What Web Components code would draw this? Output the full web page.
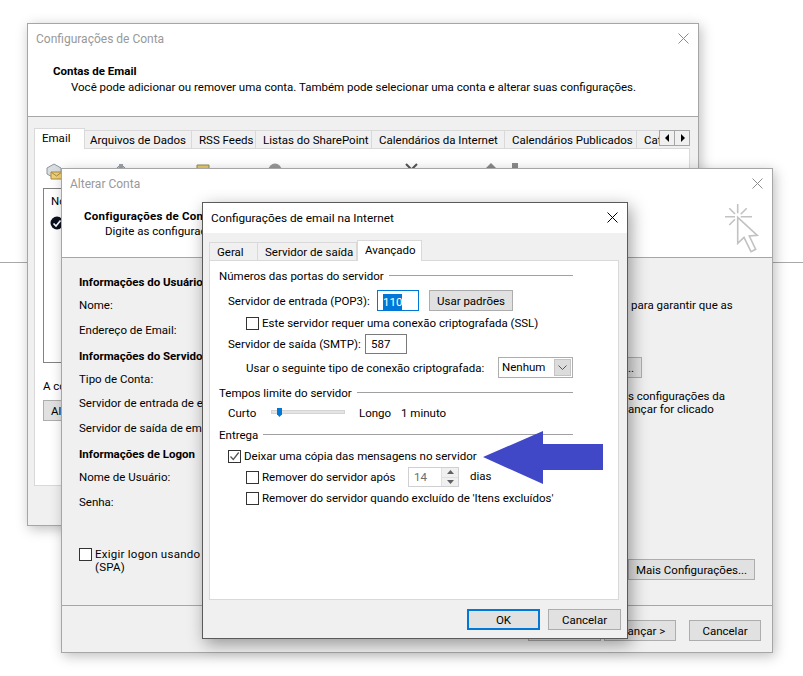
<!DOCTYPE html>
<html lang="pt-BR">
<head>
<meta charset="utf-8">
<title>Configurações de email na Internet</title>
<style>
  html, body { margin: 0; background: #fff; }
  body { font: 11.5px/16px Roboto, "Noto Sans", sans-serif; color: #000; }
  .r { display: flex; align-items: center; }
</style>
</head>
<body>
<desk-top>
  <!-- account settings, bottom window -->
  <ui-window x="27" y="23" w="672" h="503" heading="Configurações de Conta" head-h="93">
    <div slot="head" style="padding:39px 0 0 25px">
      <b>Contas de Email</b>
      <div style="margin-left:18px">Você pode adicionar ou remover uma conta. Também pode selecionar uma conta e alterar suas configurações.</div>
    </div>
    <div style="padding:11px 8px 0 6px">
      <ui-tabs scroller>
        <ui-tab active w="51">Email</ui-tab>
        <ui-tab w="107" pad="5">Arquivos de Dados</ui-tab>
        <ui-tab w="64">RSS Feeds</ui-tab>
        <ui-tab w="116">Listas do SharePoint</ui-tab>
        <ui-tab w="133">Calendários da Internet</ui-tab>
        <ui-tab w="132">Calendários Publicados</ui-tab>
        <ui-tab w="60">Catálogos</ui-tab>
        <account-pane slot="pane"></account-pane>
      </ui-tabs>
    </div>
  </ui-window>

  <!-- change account, middle window -->
  <ui-window x="61" y="168" w="712" h="485" heading="Alterar Conta" head-h="89">
    <div slot="head" style="position:relative;height:88px">
      <div style="padding:39px 0 0 22px">
        <b style="letter-spacing:.25px">Configurações de Conta</b>
        <div style="margin-left:21px;margin-top:-1px">Digite as configurações</div>
      </div>
      <cursor-mark></cursor-mark>
    </div>
    <change-form></change-form>
  </ui-window>

  <!-- internet mail settings, top window -->
  <ui-window x="202" y="202" w="426" h="437" heading="Configurações de email na Internet" head-h="30" active>
    <div style="padding:7px 8px 0 6px">
      <ui-tabs>
        <ui-tab w="49" pad="7" first>Geral</ui-tab>
        <ui-tab w="99">Servidor de saída</ui-tab>
        <ui-tab active w="65">Avançado</ui-tab>
        <advanced-pane slot="pane"></advanced-pane>
      </ui-tabs>
    </div>
    <div class="r" style="justify-content:flex-end;gap:8px;padding:9px 6px 0 0">
      <ui-button w="73" h="21" primary>OK</ui-button>
      <ui-button w="73" h="21">Cancelar</ui-button>
    </div>
  </ui-window>

  <blue-arrow></blue-arrow>
</desk-top>

<script>
function shadow(el, html) {
  const root = el.attachShadow({ mode: "open" });
  root.innerHTML = html;
  return root;
}

class DeskTop extends HTMLElement {
  connectedCallback() {
    shadow(this, `
      <style>
        :host { display: block; position: relative; width: 803px; height: 676px; overflow: hidden; }
        .line { position: absolute; left: 0; right: 0; top: 262px; height: 1px; background: #a9a9a9; }
      </style>
      <div class="line"></div><slot></slot>`);
  }
}

class UiWindow extends HTMLElement {
  connectedCallback() {
    const a = (n) => this.getAttribute(n);
    const active = this.hasAttribute("active");
    shadow(this, `
      <style>
        :host {
          position: absolute; left: ${a("x")}px; top: ${a("y")}px; width: ${a("w")}px; height: ${a("h")}px;
          box-sizing: border-box; display: flex; flex-direction: column;
          background: #f0f0f0; border: 1px solid ${active ? "#5a5a5a" : "#a6a6a6"};
          box-shadow: ${active ? "3px 5px 16px rgba(0,0,0,.38)" : "2px 3px 12px rgba(0,0,0,.26)"};
        }
        .head { position: relative; background: #fff; height: ${a("head-h")}px; flex: none; box-sizing: border-box;
                ${active ? "" : "border-bottom: 1px solid #a6a6a6;"} }
        .title { position: absolute; left: 8px; top: 7px; font-size: ${active ? 11.8 : 12}px; color: ${active ? "#000" : "#999"}; white-space: nowrap; }
        svg { position: absolute; right: 9px; top: 9px; }
        line { stroke: ${active ? "#000" : "#8c8c8c"}; stroke-width: 1; }
        .body { flex: 1; min-height: 0; }
      </style>
      <div class="head">
        <div class="title">${a("heading")}</div>
        <slot name="head"></slot>
        <svg width="11" height="11" viewBox="0 0 11 11"><line x1=".5" y1=".5" x2="10.500" y2="10.500"/><line x1="10.500" y1=".5" x2=".5" y2="10.500"/></svg>
      </div>
      <div class="body"><slot></slot></div>`);
  }
}

class UiTabs extends HTMLElement {
  connectedCallback() {
    const scroller = this.hasAttribute("scroller") ? `
      <div class="scroll">
        <span><svg width="5" height="8"><path d="M4 0v8L0 4z"/></svg></span>
        <span><svg width="5" height="8"><path d="M1 0v8l4-4z"/></svg></span>
      </div>` : "";
    shadow(this, `
      <style>
        :host { display: block; }
        .strip { display: flex; height: 21px; position: relative; z-index: 1; margin-bottom: -1px; }
        .tabs { display: flex; align-items: flex-end; flex: 1; min-width: 0; overflow: hidden; height: 21px; }
        .scroll { flex: none; display: flex; height: 16px; margin-top: 2px; box-sizing: border-box; border: 1px solid #a6a6a6; background: #f0f0f0; }
        .scroll span { width: 14px; display: flex; align-items: center; justify-content: center; }
        .scroll span + span { border-left: 1px solid #a6a6a6; }
        .pane { display: block; }
      </style>
      <div class="strip"><div class="tabs"><slot></slot></div>${scroller}</div>
      <div class="pane"><slot name="pane"></slot></div>`);
  }
}

class UiTab extends HTMLElement {
  connectedCallback() {
    const active = this.hasAttribute("active");
    const noLeft = !active && !this.hasAttribute("first");
    const pad = this.getAttribute("pad") || 7;
    shadow(this, `
      <style>
        :host {
          display: block; flex: none; box-sizing: border-box; width: ${this.getAttribute("w")}px;
          height: ${active ? 21 : 19}px; border: 1px solid #d9d9d9;
          ${active ? "border-bottom: 0; background: #fff;" : "background: #f0f0f0;"} ${noLeft ? "border-left: 0;" : ""}
          white-space: nowrap; overflow: hidden; padding-left: ${pad}px; line-height: 18px;
        }
      </style><slot></slot>`);
  }
}

class UiButton extends HTMLElement {
  connectedCallback() {
    const primary = this.hasAttribute("primary");
    shadow(this, `
      <style>
        :host {
          display: flex; flex: none; align-items: center; justify-content: center; box-sizing: border-box;
          width: ${this.getAttribute("w")}px; height: ${this.getAttribute("h") || 21}px;
          background: #e1e1e1; border: ${primary ? "2px solid #0078d7" : "1px solid #adadad"};
          white-space: nowrap; overflow: hidden;
        }
      </style><slot></slot>`);
  }
}

class UiCheck extends HTMLElement {
  connectedCallback() {
    const tick = this.hasAttribute("checked")
      ? `<svg width="11" height="11" viewBox="0 0 11 11"><path d="M1.500 5.500L4.300 8.500 9.700 1.500" fill="none" stroke="#555" stroke-width="1.300"/></svg>` : "";
    shadow(this, `
      <style>
        :host { display: flex; align-items: center; height: 16px; white-space: nowrap; }
        .box { flex: none; width: 13px; height: 13px; box-sizing: border-box; border: 1px solid #333; background: #fff;
               margin-right: 3px; display: flex; align-items: center; justify-content: center; }
      </style>
      <span class="box">${tick}</span><slot></slot>`);
  }
}

class UiGroup extends HTMLElement {
  connectedCallback() {
    shadow(this, `
      <style>
        :host { display: flex; align-items: center; height: 16px; white-space: nowrap; margin-right: 45px; }
        i { flex: 1; height: 1px; background: #a0a0a0; margin: -1px 0 0 5px; }
      </style>
      <slot></slot><i></i>`);
  }
}

class UiInput extends HTMLElement {
  connectedCallback() {
    const sel = this.hasAttribute("selected");
    shadow(this, `
      <style>
        :host {
          display: flex; flex: none; align-items: center; box-sizing: border-box; padding-left: 5px;
          width: ${this.getAttribute("w")}px; height: ${this.getAttribute("h")}px; background: #fff;
          border: 1px solid ${sel ? "#0078d7" : "#7a7a7a"};
        }
        span { ${sel ? "background: #0078d7; color: #fff; width: 19px; height: 16px; line-height: 16px; margin-top: 2px;" : ""} }
      </style><span><slot></slot></span>`);
  }
}

class UiSelect extends HTMLElement {
  connectedCallback() {
    shadow(this, `
      <style>
        :host {
          display: flex; flex: none; align-items: center; justify-content: space-between; box-sizing: border-box;
          width: 75px; height: 21px; border: 1px solid #adadad; padding: 0 1px 0 3px; background: #fff;
        }
        span { margin-top: -2px; }
        b { width: 17px; height: 17px; box-sizing: border-box; background: #dcdcdc; border: 1px solid #c4c4c4; display: flex; align-items: center; justify-content: center; }
      </style>
      <span><slot></slot></span>
      <b><svg width="9" height="5" viewBox="0 0 9 5"><path d="M.5.5l4 4 4-4" fill="none" stroke="#555"/></svg></b>`);
  }
}

class UiSpin extends HTMLElement {
  connectedCallback() {
    shadow(this, `
      <style>
        :host { display: flex; flex: none; box-sizing: border-box; width: 51px; height: 20px; border: 1px solid #d0d0d0; background: #fff; }
        .v { flex: 1; padding-left: 5px; color: #6d6d6d; line-height: 19px; }
        .b { width: 16px; display: flex; flex-direction: column; background: #f0f0f0; border-left: 1px solid #e0e0e0; }
        .b span { flex: 1; display: flex; align-items: center; justify-content: center; }
        .b span + span { border-top: 1px solid #e0e0e0; }
        path { fill: #606060; }
      </style>
      <div class="v"><slot></slot></div>
      <div class="b">
        <span><svg width="7" height="4"><path d="M3.500 0L7 4H0z"/></svg></span>
        <span><svg width="7" height="4"><path d="M0 0h7L3.500 4z"/></svg></span>
      </div>`);
  }
}

class UiSlider extends HTMLElement {
  connectedCallback() {
    shadow(this, `
      <style>
        :host { display: block; flex: none; position: relative; width: 74px; height: 16px; }
        .t { position: absolute; left: 0; right: 0; top: 5px; background: #e4e4e4; border: 1px solid #d4d4d4; height: 2px; }
        .k { position: absolute; left: 6px; top: 3px; width: 5px; height: 9px; background: #0078d7; clip-path: polygon(0 0,100% 0,100% 70%,50% 100%,0 70%); }
      </style>
      <div class="t"></div><div class="k"></div>`);
  }
}

class CursorMark extends HTMLElement {
  connectedCallback() {
    shadow(this, `
      <style>
        :host { position: absolute; left: 662px; top: 34px; width: 36px; height: 50px; }
        path { fill: none; stroke: #c2c2c2; stroke-width: 1.600; }
      </style>
      <svg width="36" height="50" viewBox="0 0 36 50">
        <path d="M1 13.700H11M13.700 1V10.300M16.700 13.700H28M5.300 5.300L11 11M22.700 5.300L16.700 11.300M5.300 22L11 16.300"/>
        <path d="M13.700 14.300V40.300L20 34.300 27 48.700 31.700 46.300 25.300 33 33.300 32.300Z"/>
      </svg>`);
  }
}

class BlueArrow extends HTMLElement {
  connectedCallback() {
    shadow(this, `
      <style>
        :host { position: absolute; left: 483px; top: 431px; width: 120px; height: 53px; }
        svg { display: block; }
      </style>
      <svg width="120" height="53" viewBox="0 0 120 53"><path fill="#4048c8" d="M0 26L60 0V13H120V39H60V53Z"/></svg>`);
  }
}

class AccountPane extends HTMLElement {
  connectedCallback() {
    const item = (w, icon, label) => `<div class="it" style="width:${w}px">${icon}<span>${label}</span></div>`;
    const mail = `<svg width="17" height="17" viewBox="0 0 17 17">
      <path d="M1 5L8 1l7 4v6l-7 4-7-4z" fill="#d8dde2" stroke="#8d959c"/>
      <path d="M5 9h11v7H5z" fill="#f1d27a" stroke="#a98a3a"/><path d="M5 9l5.500 4L16 9" fill="none" stroke="#a98a3a"/></svg>`;
    const tool = `<svg width="16" height="16" viewBox="0 0 16 16"><path d="M3 8a5 5 0 0 1 10 0" fill="#e4e6e8" stroke="#6f7880"/><path d="M6 1h4v4H6z" fill="#9aa3ab"/></svg>`;
    const gold = `<svg width="16" height="16" viewBox="0 0 16 16"><path d="M2 2h12v12H2z" fill="#e8c96a" stroke="#8f8a55"/></svg>`;
    const disc = `<svg width="14" height="14" viewBox="0 0 14 14"><circle cx="7" cy="7" r="6.500" fill="#9a9a9a"/></svg>`;
    const cross = `<svg width="13" height="13" viewBox="0 0 13 13"><path d="M1 1l11 11M12 1L1 12" stroke="#555" stroke-width="2"/></svg>`;
    const up = `<svg width="12" height="13" viewBox="0 0 12 13"><path d="M6 0l5 5H1z" fill="#8a8a8a"/></svg>`;
    const sq = `<svg width="12" height="13" viewBox="0 0 12 13"><path d="M3 0h6v5H3z" fill="#8a8a8a"/></svg>`;
    shadow(this, `
      <style>
        :host { display: block; box-sizing: border-box; height: 338px; background: #fff; border: 1px solid #d9d9d9; padding: 14px 0 0 8px; position: relative; }
        .bar { display: flex; height: 25px; padding-left: 3px; }
        .it { flex: none; display: flex; gap: 4px; white-space: nowrap; color: #333; align-items: flex-start; }
        .it span { margin-top: 2px; }
        .list { box-sizing: border-box; height: 175px; width: 637px; border: 1px solid #828282; padding: 4px 0 0 7px; }
        .ok { display: block; margin: 7px 0 0 -1px; }
        .a { margin-top: 15px; }
      </style>
      <div class="bar">
        ${item(67, mail, "Novo...")}
        ${item(82, tool, "Reparar...")}
        ${item(73, gold, "Alterar...")}
        ${item(137, disc, "Definir como Padrão")}
        ${item(80, cross, "Remover")}
        ${item(24, up, "")}
        ${item(20, sq, "")}
      </div>
      <div class="list">Nome
        <svg class="ok" width="14" height="14" viewBox="0 0 14 14"><circle cx="7" cy="7" r="6.500" fill="#0b0f1e"/><path d="M3.500 7.500l2.500 2.500 4.500-5.500" fill="none" stroke="#fff" stroke-width="1.700"/></svg>
      </div>
      <div class="a">A conta</div>
      <ui-button w="110" h="21" style="justify-content:flex-start;padding-left:7px;margin-top:6px">Alterar Pasta...</ui-button>`);
  }
}

class ChangeForm extends HTMLElement {
  connectedCallback() {
    const rows = [["Informações do Usuário", 16, 1], ["Nome:", 7], ["Endereço de Email:", 9], ["Informações do Servidor", 10, 1],
      ["Tipo de Conta:", 7], ["Servidor de entrada de email:", 8], ["Servidor de saída de email:", 9], ["Informações de Logon", 10, 1],
      ["Nome de Usuário:", 7], ["Senha:", 9]];
    const left = rows.map(([t, m, b]) => `<div style="margin-top:${m}px;${b ? "font-weight:700" : ""}">${t}</div>`).join("");
    shadow(this, `
      <style>
        :host { display: flex; flex-direction: column; height: 100%; }
        .main { display: flex; height: 347px; flex: none; }
        .l { width: 566px; padding-left: 17px; box-sizing: border-box; white-space: nowrap; overflow: hidden; }
        .c { margin-top: 36px; letter-spacing: .25px; }
        .c div { margin: -1px 0 0 16px; line-height: 13px; }
        .rc { flex: 1; white-space: nowrap; display: flex; flex-direction: column; }
        .foot { border-top: 1px solid #a6a6a6; flex: 1; display: flex; justify-content: flex-end; padding: 14px 11px 0 0; box-sizing: border-box; }
        .foot ui-button + ui-button { margin-left: 3px; }
      </style>
      <div class="main">
        <div class="l">${left}
          <div class="c"><ui-check>Exigir logon usando Autenticação</ui-check><div>(SPA)</div></div>
        </div>
        <div class="rc">
          <div style="margin:39px 0 0 3px">para garantir que as</div>
          <ui-button w="15" h="21" style="margin:44px 0 0 -1px;justify-content:flex-start">..</ui-button>
          <div style="margin-top:12px;line-height:13px">s configurações da<br>ançar for clicado</div>
          <ui-button w="127" h="21" style="margin-top:143px">Mais Configurações...</ui-button>
        </div>
      </div>
      <div class="foot">
        <ui-button w="73" h="21">&lt; Voltar</ui-button>
        <ui-button w="72" h="21">Avançar &gt;</ui-button>
        <ui-button w="72" h="21" style="margin-left:13px">Cancelar</ui-button>
      </div>`);
  }
}

class AdvancedPane extends HTMLElement {
  connectedCallback() {
    shadow(this, `
      <style>
        :host { display: block; box-sizing: border-box; height: 340px; background: #fff; border: 1px solid #d9d9d9; padding: 7px 0 0 9px; white-space: nowrap; }
        .r { display: flex; align-items: center; }
        .i1 { margin-left: 9px; }
        .i2 { margin-left: 27px; }
      </style>
      <ui-group>Números das portas do servidor</ui-group>
      <div class="r i1" style="margin-top:6px;height:21px">
        <span style="width:149px">Servidor de entrada (POP3):</span>
        <ui-input w="42" h="21" selected>110</ui-input>
        <ui-button w="84" h="21" style="margin-left:10px">Usar padrões</ui-button>
      </div>
      <ui-check class="i2" style="margin-top:4px">Este servidor requer uma conexão criptografada (SSL)</ui-check>
      <div class="r i1" style="margin-top:3px;height:20px">
        <span style="width:137px">Servidor de saída (SMTP):</span>
        <ui-input w="42" h="20">587</ui-input>
      </div>
      <div class="r i2" style="margin-top:3px;height:21px">
        <span style="width:252px">Usar o seguinte tipo de conexão criptografada:</span>
        <ui-select>Nenhum</ui-select>
      </div>
      <ui-group style="margin-top:7px">Tempos limite do servidor</ui-group>
      <div class="r i1" style="margin-top:4px;height:16px">
        <span style="width:43px">Curto</span>
        <ui-slider></ui-slider>
        <span style="margin-left:14px;width:42px">Longo</span>
        <span>1 minuto</span>
      </div>
      <ui-group style="margin-top:6px">Entrega</ui-group>
      <ui-check class="i1" checked style="margin-top:5px">Deixar uma cópia das mensagens no servidor</ui-check>
      <div class="r i2" style="margin-top:3px;height:20px">
        <ui-check style="width:162px">Remover do servidor após</ui-check>
        <ui-spin>14</ui-spin>
        <span style="margin-left:11px;margin-top:-3px">dias</span>
      </div>
      <ui-check class="i2" style="margin-top:3px">Remover do servidor quando excluído de 'Itens excluídos'</ui-check>`);
  }
}

const defs = { "desk-top": DeskTop, "ui-window": UiWindow, "ui-tabs": UiTabs, "ui-tab": UiTab, "ui-button": UiButton,
  "ui-check": UiCheck, "ui-group": UiGroup, "ui-input": UiInput, "ui-select": UiSelect, "ui-spin": UiSpin,
  "ui-slider": UiSlider, "cursor-mark": CursorMark, "blue-arrow": BlueArrow, "account-pane": AccountPane,
  "change-form": ChangeForm, "advanced-pane": AdvancedPane };
for (const [name, cls] of Object.entries(defs)) customElements.define(name, cls);
</script>
</body>
</html>
